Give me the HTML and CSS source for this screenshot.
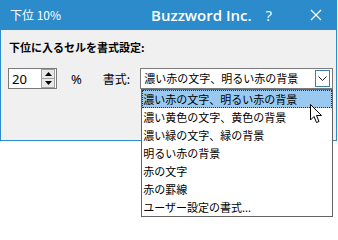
FILE: index.html
```html
<!DOCTYPE html>
<html lang="ja">
<head>
<meta charset="utf-8">
<link rel="stylesheet" href="styles.css">
</head>
<body>
<div class="dialog">
  <div class="titlebar">
    <span class="t-left">下位 10%</span>
    <span class="t-app">Buzzword Inc.</span>
    <span class="t-help">?</span>
    <span class="t-close">
      <svg width="12" height="12" viewBox="0 0 12 12"><path d="M1 1 L11 11 M11 1 L1 11" stroke="#fff" stroke-width="1.2" fill="none"/></svg>
    </span>
  </div>
  <div class="content">
    <div class="heading">下位に入るセルを書式設定:</div>
    <div class="row">
      <div class="spin">
        <span class="spin-val">20</span>
        <span class="spin-btns">
          <span class="sb up"><svg width="7" height="4" viewBox="0 0 7 4"><path d="M0 4 L3.5 0 L7 4 Z" fill="#000"/></svg></span>
          <span class="sb down"><svg width="7" height="4" viewBox="0 0 7 4"><path d="M0 0 L3.5 4 L7 0 Z" fill="#000"/></svg></span>
        </span>
      </div>
      <span class="pct">%</span>
      <span class="lbl">書式:</span>
      <div class="combo-wrap">
        <div class="combo">
          <span class="combo-val">濃い赤の文字、明るい赤の背景</span>
          <span class="combo-btn"><svg width="9" height="5" viewBox="0 0 9 5"><path d="M0.5 0.5 L4.5 4.5 L8.5 0.5" stroke="#222" stroke-width="1" fill="none"/></svg></span>
        </div>
        <ul class="list">
          <li class="sel">濃い赤の文字、明るい赤の背景</li>
          <li>濃い黄色の文字、黄色の背景</li>
          <li>濃い緑の文字、緑の背景</li>
          <li>明るい赤の背景</li>
          <li>赤の文字</li>
          <li>赤の罫線</li>
          <li>ユーザー設定の書式...</li>
        </ul>
        <svg class="cursor" width="13" height="20" viewBox="0 0 13 20"><path d="M0.5 0.5 L0.5 16 L4 12.5 L6.5 18.5 L9 17.5 L6.5 11.5 L11.5 11.5 Z" fill="#fff" stroke="#000" stroke-width="1"/></svg>
      </div>
    </div>
  </div>
</div>
</body>
</html>
```
FILE: styles.css
```css
* { box-sizing: border-box; }
html, body { margin: 0; padding: 0; background: #fff; }
body {
  width: 338px; height: 240px; overflow: hidden;
  font-family: "Noto Sans CJK JP", "Noto Sans", sans-serif;
  font-size: 11px; color: #000;
}
.dialog {
  width: 337px;
  border: 1px solid #2b8bcb;
  border-top: none;
  background: #f0f0f0;
}
.titlebar {
  height: 30px;
  background: #2b8bcb;
  color: #fff;
  display: flex;
  align-items: center;
  position: relative;
  margin: 0 -1px;
}
.t-left { margin-left: 10px; font-size: 12px; line-height: 1; white-space: nowrap; }
.t-app {
  margin-left: 90px;
  font-family: "Open Sans", "Noto Sans", sans-serif;
  font-weight: 600; font-size: 15px; line-height: 1; white-space: nowrap;
}
.t-help { margin-left: 14px; font-family: "Open Sans", sans-serif; font-size: 15px; line-height: 1; }
.t-close { margin-left: 38px; display: flex; }
.content { padding: 9px 0 0 7px; height: 110px; }
.heading { font-weight: bold; font-size: 11px; line-height: 16px; margin-left: 1px; white-space: nowrap; }
.row { display: flex; align-items: center; margin-top: 13px; }
.spin {
  width: 49px; height: 21px; flex-shrink: 0;
  background: #fff; border: 1px solid #7a7a7a;
  display: flex; align-items: center; justify-content: space-between;
  padding-left: 3px;
  font-family: "Noto Sans", sans-serif; font-size: 13px;
}
.spin-btns { display: flex; flex-direction: column; width: 14px; height: 19px; margin-right: 1px; }
.sb {
  flex: 1; display: flex; align-items: center; justify-content: center;
  background: #e8e8e8; border: 1px solid #a0a0a0;
}
.sb.down { border-top: none; }
.pct { margin-left: 14px; font-family: "Noto Sans", sans-serif; font-size: 13px; flex-shrink: 0; }
.lbl { margin-left: 21px; font-size: 12px; white-space: nowrap; flex-shrink: 0; }
.combo-wrap { margin-left: 10px; position: relative; flex-shrink: 0; }
.combo {
  width: 193px; height: 21px;
  background: #fff; border: 1px solid #7a7a7a;
  display: flex; align-items: center; justify-content: space-between;
  padding-left: 3px;
}
.combo-val { font-size: 11px; line-height: 1; white-space: nowrap; }
.combo-btn {
  width: 15px; height: 17px; margin-right: 2px;
  border: 1px solid #3c7fb1; background: #fff;
  display: flex; align-items: center; justify-content: center;
}
.list {
  position: absolute; left: 1px; top: 21px;
  width: 192px; margin: 0; padding: 0; list-style: none;
  background: #fff; border: 1px solid #646464;
}
.list li { height: 18px; line-height: 18px; padding-left: 1px; font-size: 11px; white-space: nowrap; }
.list li.sel { background: #99c9ef; outline: 1px dotted #333; outline-offset: -1px; }
.cursor { position: absolute; left: 170px; top: 36px; }
```
